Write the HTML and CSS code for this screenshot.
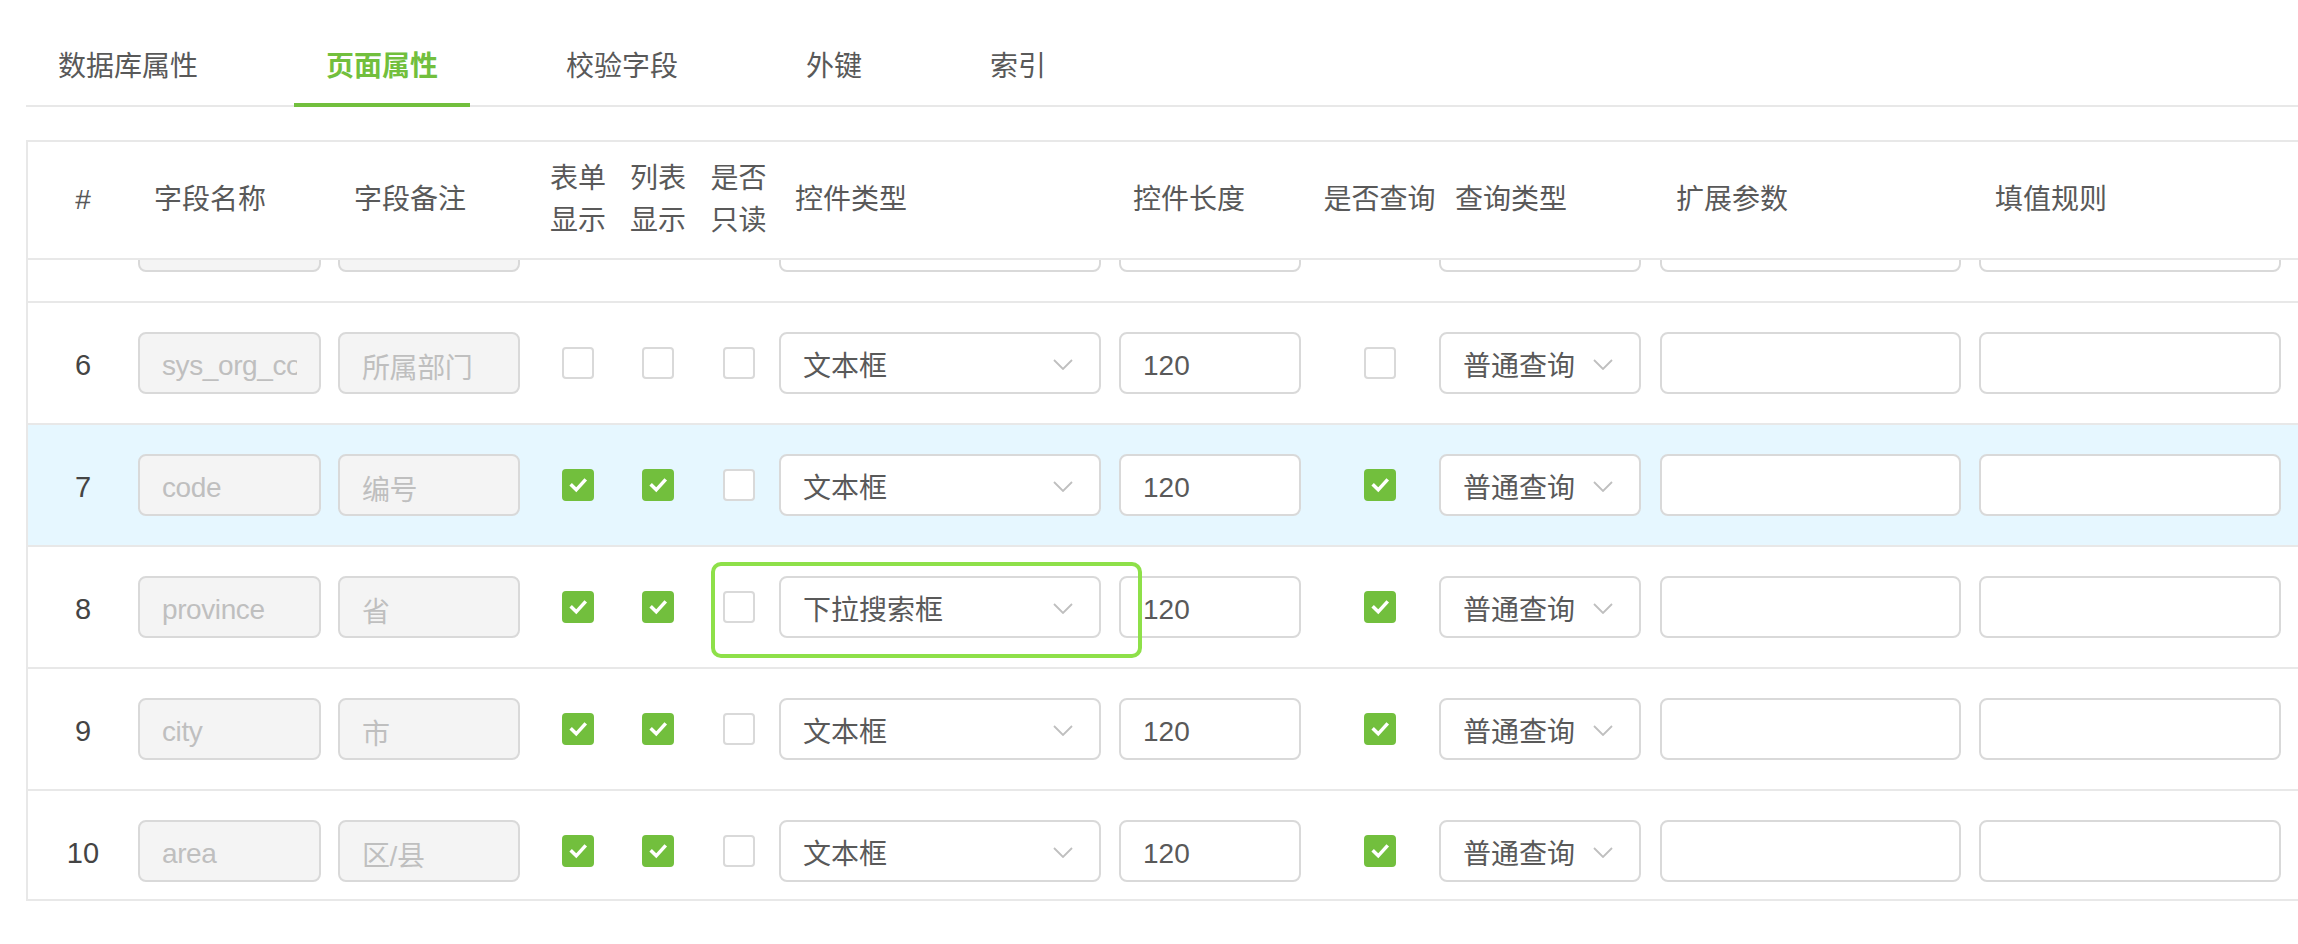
FILE: index.html
```html
<!DOCTYPE html>
<html lang="zh-CN">
<head>
<meta charset="utf-8">
<title>页面属性</title>
<link rel="stylesheet" href="styles.css">
</head>
<body>
<div class="page">
  <nav class="tabs">
    <div class="tab">数据库属性</div>
    <div class="tab active">页面属性</div>
    <div class="tab">校验字段</div>
    <div class="tab">外键</div>
    <div class="tab">索引</div>
  </nav>

  <div class="table">
    <div class="thead grid">
      <div class="th th-center">#</div>
      <div class="th">字段名称</div>
      <div class="th">字段备注</div>
      <div class="th th-center">表单<br>显示</div>
      <div class="th th-center">列表<br>显示</div>
      <div class="th th-center">是否<br>只读</div>
      <div class="th">控件类型</div>
      <div class="th th-len">控件长度</div>
      <div class="th th-center">是否查询</div>
      <div class="th">查询类型</div>
      <div class="th">扩展参数</div>
      <div class="th">填值规则</div>
      <div class="th"></div>
    </div>

    <div class="tbody">
      <div class="rows">
        <!-- row 5 (partially scrolled out) -->
        <div class="row grid">
          <div class="td td-num"></div>
          <div class="td"><input class="inp inp-dis w-name" value="" readonly></div>
          <div class="td"><input class="inp inp-dis w-note" value="" readonly></div>
          <div class="td td-center"><span class="cb"></span></div>
          <div class="td td-center"><span class="cb"></span></div>
          <div class="td td-center"><span class="cb"></span></div>
          <div class="td"><div class="sel w-type"><span></span><svg class="arrow" viewBox="0 0 20 11"><polyline points="1,1 10,10 19,1"/></svg></div></div>
          <div class="td"><input class="inp w-len" value="" readonly></div>
          <div class="td td-center"><span class="cb"></span></div>
          <div class="td"><div class="sel w-qtype"><span></span><svg class="arrow" viewBox="0 0 20 11"><polyline points="1,1 10,10 19,1"/></svg></div></div>
          <div class="td"><input class="inp w-ext" value="" readonly></div>
          <div class="td"><input class="inp w-fill" value="" readonly></div>
          <div class="td"></div>
        </div>

        <div class="row grid">
          <div class="td td-num">6</div>
          <div class="td"><input class="inp inp-dis w-name" value="sys_org_code" readonly></div>
          <div class="td"><input class="inp inp-dis w-note" value="所属部门" readonly></div>
          <div class="td td-center"><span class="cb"></span></div>
          <div class="td td-center"><span class="cb"></span></div>
          <div class="td td-center"><span class="cb"></span></div>
          <div class="td"><div class="sel w-type"><span>文本框</span><svg class="arrow" viewBox="0 0 20 11"><polyline points="1,1 10,10 19,1"/></svg></div></div>
          <div class="td"><input class="inp w-len" value="120" readonly></div>
          <div class="td td-center"><span class="cb"></span></div>
          <div class="td"><div class="sel w-qtype"><span>普通查询</span><svg class="arrow" viewBox="0 0 20 11"><polyline points="1,1 10,10 19,1"/></svg></div></div>
          <div class="td"><input class="inp w-ext" value="" readonly></div>
          <div class="td"><input class="inp w-fill" value="" readonly></div>
          <div class="td"></div>
        </div>

        <div class="row grid row-hover">
          <div class="td td-num">7</div>
          <div class="td"><input class="inp inp-dis w-name" value="code" readonly></div>
          <div class="td"><input class="inp inp-dis w-note" value="编号" readonly></div>
          <div class="td td-center"><span class="cb on"><svg viewBox="0 0 32 32"><polyline points="9,16.5 14,21.5 23.5,11"/></svg></span></div>
          <div class="td td-center"><span class="cb on"><svg viewBox="0 0 32 32"><polyline points="9,16.5 14,21.5 23.5,11"/></svg></span></div>
          <div class="td td-center"><span class="cb"></span></div>
          <div class="td"><div class="sel w-type"><span>文本框</span><svg class="arrow" viewBox="0 0 20 11"><polyline points="1,1 10,10 19,1"/></svg></div></div>
          <div class="td"><input class="inp w-len" value="120" readonly></div>
          <div class="td td-center"><span class="cb on"><svg viewBox="0 0 32 32"><polyline points="9,16.5 14,21.5 23.5,11"/></svg></span></div>
          <div class="td"><div class="sel w-qtype"><span>普通查询</span><svg class="arrow" viewBox="0 0 20 11"><polyline points="1,1 10,10 19,1"/></svg></div></div>
          <div class="td"><input class="inp w-ext" value="" readonly></div>
          <div class="td"><input class="inp w-fill" value="" readonly></div>
          <div class="td"></div>
        </div>

        <div class="row grid">
          <div class="td td-num">8</div>
          <div class="td"><input class="inp inp-dis w-name" value="province" readonly></div>
          <div class="td"><input class="inp inp-dis w-note" value="省" readonly></div>
          <div class="td td-center"><span class="cb on"><svg viewBox="0 0 32 32"><polyline points="9,16.5 14,21.5 23.5,11"/></svg></span></div>
          <div class="td td-center"><span class="cb on"><svg viewBox="0 0 32 32"><polyline points="9,16.5 14,21.5 23.5,11"/></svg></span></div>
          <div class="td td-center"><span class="cb"></span></div>
          <div class="td"><div class="sel w-type"><span>下拉搜索框</span><svg class="arrow" viewBox="0 0 20 11"><polyline points="1,1 10,10 19,1"/></svg></div></div>
          <div class="td"><input class="inp w-len" value="120" readonly></div>
          <div class="td td-center"><span class="cb on"><svg viewBox="0 0 32 32"><polyline points="9,16.5 14,21.5 23.5,11"/></svg></span></div>
          <div class="td"><div class="sel w-qtype"><span>普通查询</span><svg class="arrow" viewBox="0 0 20 11"><polyline points="1,1 10,10 19,1"/></svg></div></div>
          <div class="td"><input class="inp w-ext" value="" readonly></div>
          <div class="td"><input class="inp w-fill" value="" readonly></div>
          <div class="td"></div>
          <div class="mark"></div>
        </div>

        <div class="row grid">
          <div class="td td-num">9</div>
          <div class="td"><input class="inp inp-dis w-name" value="city" readonly></div>
          <div class="td"><input class="inp inp-dis w-note" value="市" readonly></div>
          <div class="td td-center"><span class="cb on"><svg viewBox="0 0 32 32"><polyline points="9,16.5 14,21.5 23.5,11"/></svg></span></div>
          <div class="td td-center"><span class="cb on"><svg viewBox="0 0 32 32"><polyline points="9,16.5 14,21.5 23.5,11"/></svg></span></div>
          <div class="td td-center"><span class="cb"></span></div>
          <div class="td"><div class="sel w-type"><span>文本框</span><svg class="arrow" viewBox="0 0 20 11"><polyline points="1,1 10,10 19,1"/></svg></div></div>
          <div class="td"><input class="inp w-len" value="120" readonly></div>
          <div class="td td-center"><span class="cb on"><svg viewBox="0 0 32 32"><polyline points="9,16.5 14,21.5 23.5,11"/></svg></span></div>
          <div class="td"><div class="sel w-qtype"><span>普通查询</span><svg class="arrow" viewBox="0 0 20 11"><polyline points="1,1 10,10 19,1"/></svg></div></div>
          <div class="td"><input class="inp w-ext" value="" readonly></div>
          <div class="td"><input class="inp w-fill" value="" readonly></div>
          <div class="td"></div>
        </div>

        <div class="row grid">
          <div class="td td-num">10</div>
          <div class="td"><input class="inp inp-dis w-name" value="area" readonly></div>
          <div class="td"><input class="inp inp-dis w-note" value="区/县" readonly></div>
          <div class="td td-center"><span class="cb on"><svg viewBox="0 0 32 32"><polyline points="9,16.5 14,21.5 23.5,11"/></svg></span></div>
          <div class="td td-center"><span class="cb on"><svg viewBox="0 0 32 32"><polyline points="9,16.5 14,21.5 23.5,11"/></svg></span></div>
          <div class="td td-center"><span class="cb"></span></div>
          <div class="td"><div class="sel w-type"><span>文本框</span><svg class="arrow" viewBox="0 0 20 11"><polyline points="1,1 10,10 19,1"/></svg></div></div>
          <div class="td"><input class="inp w-len" value="120" readonly></div>
          <div class="td td-center"><span class="cb on"><svg viewBox="0 0 32 32"><polyline points="9,16.5 14,21.5 23.5,11"/></svg></span></div>
          <div class="td"><div class="sel w-qtype"><span>普通查询</span><svg class="arrow" viewBox="0 0 20 11"><polyline points="1,1 10,10 19,1"/></svg></div></div>
          <div class="td"><input class="inp w-ext" value="" readonly></div>
          <div class="td"><input class="inp w-fill" value="" readonly></div>
          <div class="td"></div>
        </div>
      </div>
    </div>
  </div>
</div>
</body>
</html>
```

FILE: styles.css
```css
html, body {
  margin: 0;
  padding: 0;
  background: #fff;
  overflow: hidden;
}

body {
  font-family: "Liberation Sans", "Noto Sans CJK SC", sans-serif;
  font-size: 28px;
  color: #595959;
}

.page {
  padding-left: 26px;
}

/* ---------- tabs ---------- */
.tabs {
  display: flex;
  border-bottom: 2px solid #e8e8e8;
}

.tab {
  position: relative;
  padding: 46px 32px 17px;
  margin-right: 64px;
  line-height: 42px;
  color: #595959;
  white-space: nowrap;
}

.tab.active {
  color: #72bf3d;
  font-weight: 600;
}

.tab.active::after {
  content: "";
  position: absolute;
  left: 0;
  right: 0;
  bottom: -2px;
  height: 4px;
  background: #72bf3d;
}

/* ---------- table ---------- */
.table {
  margin-top: 33px;
  width: 2400px;
  border: 2px solid #e8e8e8;
}

.grid {
  display: grid;
  grid-template-columns: 110px 200px 200px 80px 80px 81px 340px 201px 119px 221px 319px 319px 1fr;
  align-items: center;
}

.thead {
  height: 116px;
  border-bottom: 2px solid #e8e8e8;
  color: #595959;
  line-height: 42px;
}

.th {
  padding-left: 16px;
  white-space: nowrap;
}

.th-len {
  padding-left: 14px;
}

.th-center {
  padding-left: 0;
  text-align: center;
}

.tbody {
  height: 639px;
  overflow: hidden;
}

.rows {
  margin-top: -79px;
}

.row {
  position: relative;
  height: 122px;
  box-sizing: border-box;
  border-bottom: 2px solid #e8e8e8;
}

.row-hover {
  background: #e6f7ff;
}

.td {
  display: flex;
  align-items: center;
}

.td-center {
  justify-content: center;
}

.td-num {
  justify-content: center;
  padding-top: 5px;
  color: #444;
  font-size: 29px;
}

/* ---------- inputs ---------- */
.inp {
  box-sizing: border-box;
  height: 62px;
  padding: 5px 22px 0;
  border: 2px solid #d9d9d9;
  border-radius: 8px;
  background: #fff;
  font: inherit;
  font-size: 28px;
  color: #595959;
  outline: none;
}

.inp-dis {
  background: #f4f4f4;
  color: #bfbfbf;
  letter-spacing: -0.4px;
}

.w-name { width: 183px; }
.w-note { width: 182px; }
.w-len  { width: 182px; }
.w-ext  { width: 301px; }
.w-fill { width: 302px; }
.w-type { width: 322px; }
.w-qtype { width: 202px; }

.sel {
  box-sizing: border-box;
  height: 62px;
  display: flex;
  align-items: center;
  justify-content: space-between;
  padding: 2px 26px 0 22px;
  border: 2px solid #d9d9d9;
  border-radius: 8px;
  background: #fff;
  color: #595959;
  white-space: nowrap;
}

.arrow {
  width: 20px;
  height: 11px;
  fill: none;
  stroke: #bfbfbf;
  stroke-width: 1.8;
}

/* ---------- checkbox ---------- */
.cb {
  box-sizing: border-box;
  display: inline-flex;
  width: 32px;
  height: 32px;
  border: 2px solid #d9d9d9;
  border-radius: 4px;
  background: #fff;
}

.cb.on {
  border-color: #72bf3d;
  background: #72bf3d;
}

.cb svg {
  width: 28px;
  height: 28px;
  fill: none;
  stroke: #fff;
  stroke-width: 4;
  stroke-linecap: square;
}

/* ---------- annotation ---------- */
.mark {
  position: absolute;
  left: 683px;
  top: 15px;
  width: 431px;
  height: 96px;
  box-sizing: border-box;
  border: 4px solid #8ee049;
  border-radius: 10px;
  pointer-events: none;
}
```
